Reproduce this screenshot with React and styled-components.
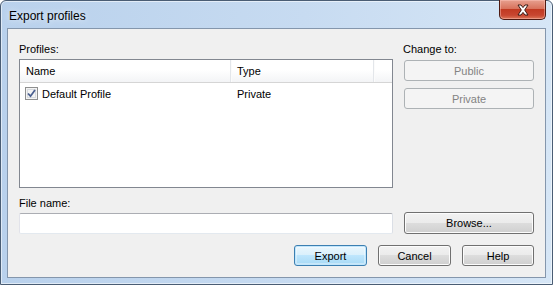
import React from 'react';
import styled, { createGlobalStyle } from 'styled-components';

const GlobalStyle = createGlobalStyle`
  html, body {
    margin: 0;
    padding: 0;
    background: #ffffff;
  }
  body {
    font-family: "Segoe UI", "Liberation Sans", Arial, sans-serif;
    font-size: 11px;
    color: #000;
  }
`;

const Window = styled.div`
  box-sizing: border-box;
  width: 553px;
  height: 285px;
  display: flex;
  flex-direction: column;
  border: 1px solid #4a5d74;
  border-radius: 6px 6px 0 0;
  background: linear-gradient(to right, #b9d1ec 0%, #c7dbf1 55%, #d6e6f6 100%);
  box-shadow: inset 0 0 0 1px rgba(255, 255, 255, 0.55);
`;

const TitleBar = styled.div`
  height: 27px;
  display: flex;
  align-items: flex-start;
  flex-shrink: 0;
`;

const Title = styled.div`
  padding: 7px 0 0 8px;
  font-size: 12px;
  line-height: 16px;
  color: #000;
  text-shadow: 0 0 6px rgba(255, 255, 255, 0.9);
`;

const CloseButton = styled.div`
  box-sizing: border-box;
  width: 47px;
  height: 20px;
  margin: -1px 6px 0 auto;
  display: flex;
  align-items: center;
  justify-content: center;
  border: 1px solid #4e1a12;
  border-top: none;
  border-radius: 0 0 5px 5px;
  background: linear-gradient(#e7a08f 0%, #d8735d 45%, #c13a22 50%, #c84630 80%, #dc7658 100%);
  box-shadow: inset 0 0 0 1px rgba(255, 200, 190, 0.45);
`;

const Client = styled.div`
  box-sizing: border-box;
  height: 250px;
  margin: 0 6px;
  padding: 13px 11px 12px 11px;
  border: 1px solid #8496ac;
  background: #f0f0f0;
  display: flex;
  flex-direction: column;
`;

const Form = styled.div`
  display: grid;
  grid-template-columns: 374px 130px;
  column-gap: 11px;
`;

const Label = styled.div`
  height: ${(p) => p.$h || 17}px;
  line-height: 15px;
  margin-left: ${(p) => (p.$shift ? -1 : 0)}px;
`;

const ListBox = styled.div`
  box-sizing: border-box;
  height: 129px;
  border: 1px solid #828790;
  background: #fff;
  display: flex;
  flex-direction: column;
`;

const HeaderRow = styled.div`
  display: flex;
  height: 22px;
  border-bottom: 1px solid #d5d5d5;
  background: linear-gradient(#ffffff 0%, #ffffff 45%, #f3f4f6 100%);
`;

const HeaderCell = styled.div`
  box-sizing: border-box;
  width: ${(p) => p.$w}px;
  flex: ${(p) => (p.$grow ? 1 : 'none')};
  padding-left: 6px;
  line-height: 22px;
  border-right: ${(p) => (p.$grow ? 'none' : '1px solid #e3e6ea')};
  box-shadow: ${(p) => (p.$grow ? 'none' : '1px 0 0 #fbfbfb')};
`;

const Row = styled.div`
  display: flex;
  align-items: center;
  height: 19px;
  padding-top: 1px;
`;

const Cell = styled.div`
  box-sizing: border-box;
  width: ${(p) => p.$w}px;
  display: flex;
  align-items: center;
  padding-left: ${(p) => p.$pad}px;
`;

const CheckBox = styled.div`
  box-sizing: border-box;
  width: 13px;
  height: 13px;
  margin-right: 4px;
  border: 1px solid #8e8f8f;
  background: #f4f4f4;
  display: flex;
  align-items: center;
  justify-content: center;
  box-shadow: inset 0 0 0 1px #f4f4f4, inset 0 0 0 2px #d7dade;
`;

const Stack = styled.div`
  display: flex;
  flex-direction: column;
  gap: 7px;
  padding-top: 1px;
`;

const Button = styled.div`
  box-sizing: border-box;
  width: ${(p) => p.$w || 130}px;
  height: ${(p) => p.$h || 21}px;
  display: flex;
  align-items: center;
  justify-content: center;
  border-radius: 3px;
  border: 1px solid ${(p) => (p.$disabled ? '#adb2b5' : p.$default ? '#3c7fb1' : '#707070')};
  color: ${(p) => (p.$disabled ? '#838383' : '#000')};
  background: ${(p) =>
    p.$disabled
      ? '#f4f4f4'
      : p.$default
      ? 'linear-gradient(#eaf6fd 0%, #d9f0fc 50%, #bee6fd 50%, #a7d9f5 100%)'
      : 'linear-gradient(#f2f2f2 0%, #ebebeb 50%, #dddddd 50%, #cfcfcf 100%)'};
  box-shadow: ${(p) =>
    p.$disabled
      ? 'none'
      : p.$default
      ? 'inset 0 0 0 1px #c1e6fc, inset 0 0 0 2px rgba(255,255,255,0.35)'
      : 'inset 0 0 0 1px #fcfcfc'};
`;

const TextInput = styled.div`
  box-sizing: border-box;
  height: 21px;
  margin-top: 1px;
  border: 1px solid;
  border-color: #abadb3 #dbdfe6 #e3e9ef #e2e3ea;
  border-radius: 2px;
  background: #fff;
`;

const Footer = styled.div`
  display: flex;
  justify-content: flex-end;
  gap: 11px;
  margin-top: 11px;
`;

const Gap = styled.div`
  height: 8px;
  grid-column: 1 / span 2;
`;

function CloseGlyph() {
  return (
    <svg width="14" height="12" viewBox="0 0 14 12">
      <path
        d="M2 1 H5 L7 3.6 L9 1 H12 L8.7 6 L12 11 H9 L7 8.4 L5 11 H2 L5.3 6 Z"
        fill="#ffffff"
        stroke="#3b1a14"
        strokeWidth="1"
        strokeLinejoin="round"
      />
    </svg>
  );
}

function CheckMark() {
  return (
    <svg width="9" height="9" viewBox="0 0 9 9">
      <path d="M1 4.5 L3.5 7.2 L8 1" fill="none" stroke="#4a5f8f" strokeWidth="1.8" />
    </svg>
  );
}

export default function App() {
  return (
    <>
      <GlobalStyle />
      <Window>
        <TitleBar>
          <Title>Export profiles</Title>
          <CloseButton>
            <CloseGlyph />
          </CloseButton>
        </TitleBar>
        <Client>
          <Form>
            <Label>Profiles:</Label>
            <Label $shift>Change to:</Label>

            <ListBox>
              <HeaderRow>
                <HeaderCell $w={211}>Name</HeaderCell>
                <HeaderCell $w={143}>Type</HeaderCell>
                <HeaderCell $grow />
              </HeaderRow>
              <Row>
                <Cell $w={211} $pad={5}>
                  <CheckBox>
                    <CheckMark />
                  </CheckBox>
                  Default Profile
                </Cell>
                <Cell $w={143} $pad={6}>Private</Cell>
              </Row>
            </ListBox>
            <Stack>
              <Button $disabled>Public</Button>
              <Button $disabled>Private</Button>
            </Stack>

            <Gap />
            <Label $h={16}>File name:</Label>
            <div />

            <TextInput />
            <Button $h={22}>Browse...</Button>
          </Form>
          <Footer>
            <Button $w={73} $default>Export</Button>
            <Button $w={73}>Cancel</Button>
            <Button $w={72}>Help</Button>
          </Footer>
        </Client>
      </Window>
    </>
  );
}
